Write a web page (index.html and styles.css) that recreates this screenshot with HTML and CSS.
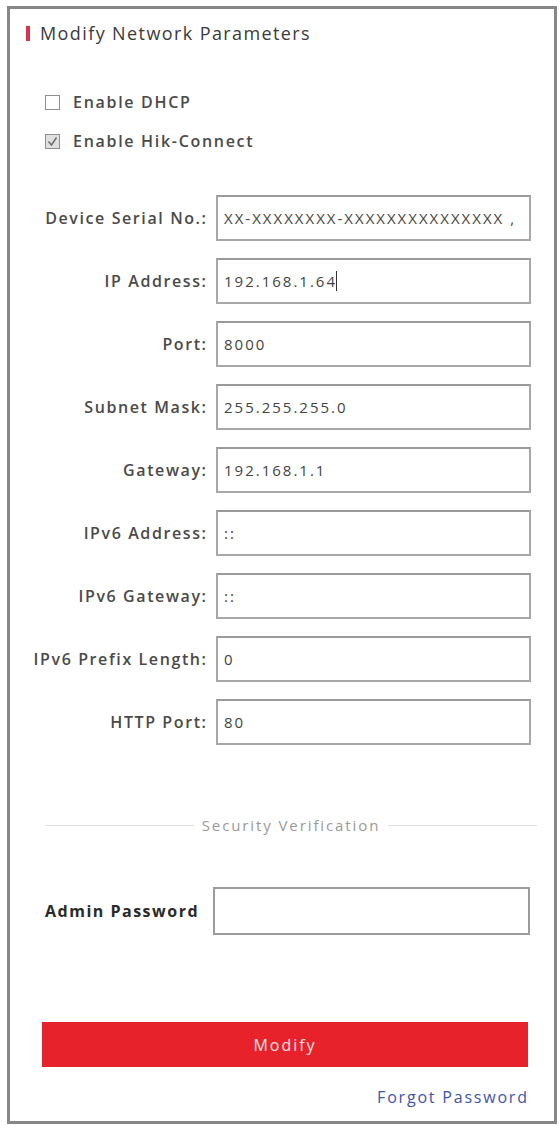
FILE: index.html
```html
<!DOCTYPE html>
<html lang="en">
<head>
<meta charset="utf-8">
<title>Modify Network Parameters</title>
<link rel="stylesheet" href="styles.css">
</head>
<body>
<div class="panel">
  <h2 class="title"><span class="bar"></span>Modify Network Parameters</h2>

  <div class="checks">
    <div class="check"><span class="box"></span><span>Enable DHCP</span></div>
    <div class="check"><span class="box checked"><svg viewBox="0 0 15 15" width="15" height="15"><path d="M3.5 7.5 L6.5 11 L11.5 3.5" fill="none" stroke="#6a6a6a" stroke-width="1.4"/></svg></span><span>Enable Hik-Connect</span></div>
  </div>

  <div class="form">
    <div class="lbl">Device Serial No.:</div><div class="field">XX-XXXXXXXX-XXXXXXXXXXXXXXX ,</div>
    <div class="lbl">IP Address:</div><div class="field">192.168.1.64<span class="caret"></span></div>
    <div class="lbl">Port:</div><div class="field">8000</div>
    <div class="lbl">Subnet Mask:</div><div class="field">255.255.255.0</div>
    <div class="lbl">Gateway:</div><div class="field">192.168.1.1</div>
    <div class="lbl">IPv6 Address:</div><div class="field">::</div>
    <div class="lbl">IPv6 Gateway:</div><div class="field">::</div>
    <div class="lbl">IPv6 Prefix Length:</div><div class="field">0</div>
    <div class="lbl">HTTP Port:</div><div class="field">80</div>
  </div>

  <div class="divider"><span class="line"></span><span class="dtext">Security Verification</span><span class="line"></span></div>

  <div class="admin">
    <div class="alabel">Admin Password</div>
    <div class="field afield"></div>
  </div>

  <button class="modify" type="button">Modify</button>

  <div class="forgot"><a href="#">Forgot Password</a></div>
</div>
</body>
</html>
```

FILE: styles.css
```css
html, body {
  margin: 0;
  padding: 0;
  background: #ffffff;
}

body {
  font-family: "Open Sans", "Noto Sans", "DejaVu Sans", sans-serif;
  color: #3a3a3a;
}

.panel {
  box-sizing: border-box;
  margin: 6px 2px 0 7px;
  height: 1118px;
  border: 3px solid #878787;
  padding-top: 12px;
  display: flex;
  flex-direction: column;
}

.title {
  margin: 0 0 0 16px;
  height: 24px;
  line-height: 24px;
  font-size: 18px;
  font-weight: 500;
  letter-spacing: 1.4px;
  color: #3b3b3b;
  display: flex;
  align-items: center;
  white-space: nowrap;
}

.bar {
  display: inline-block;
  width: 4px;
  height: 15px;
  background: #d8344a;
  margin-right: 10px;
}

.checks {
  margin: 45px 0 0 35px;
  display: flex;
  flex-direction: column;
  gap: 15px;
}

.check {
  height: 24px;
  display: flex;
  align-items: center;
  font-size: 16px;
  font-weight: 600;
  letter-spacing: 1.7px;
  color: #4a4a4a;
  white-space: nowrap;
}

.box {
  box-sizing: border-box;
  width: 15px;
  height: 15px;
  border: 1px solid #8f8f8f;
  background: #fff;
  margin-right: 13px;
  display: inline-flex;
  flex: none;
}

.box.checked {
  background: #e0e0e0;
}

.box svg {
  margin: -1px;
}

.form {
  margin: 42px 0 0 0;
  display: grid;
  grid-template-columns: 196px 315px;
  column-gap: 10px;
  row-gap: 17px;
}

.lbl {
  height: 46px;
  display: flex;
  align-items: center;
  justify-content: flex-end;
  font-size: 16px;
  font-weight: 600;
  letter-spacing: 1.6px;
  color: #4a4a4a;
  white-space: nowrap;
  margin-right: -1.6px;
}

.field {
  box-sizing: border-box;
  height: 46px;
  border: 2px solid #a8a8a8;
  border-top-color: #9a9a9a;
  padding-left: 6px;
  display: flex;
  align-items: center;
  overflow: hidden;
  white-space: nowrap;
  font-size: 15px;
  color: #444;
  letter-spacing: 2px;
}

.caret {
  display: inline-block;
  width: 1px;
  height: 20px;
  background: #333;
  margin-left: -1px;
}

.divider {
  margin: 70px 0 0 35px;
  width: 492px;
  height: 20px;
  display: flex;
  align-items: center;
  gap: 8px;
}

.line {
  flex: 1;
  height: 1px;
  background: #e0e0e0;
}

.dtext {
  font-size: 15px;
  color: #9a9a9a;
  letter-spacing: 1.9px;
  white-space: nowrap;
}

.admin {
  margin: 52px 0 0 35px;
  display: grid;
  grid-template-columns: 168px 317px;
  align-items: center;
}

.alabel {
  font-size: 16px;
  font-weight: 700;
  color: #2a2a2a;
  letter-spacing: 1.5px;
  white-space: nowrap;
}

.afield {
  height: 48px;
  border: 2px solid #9c9c9c;
}

.modify {
  margin: 87px 0 0 32px;
  width: 486px;
  height: 45px;
  border: none;
  background: #e8222b;
  color: #fde3e3;
  font-family: "Open Sans", "Noto Sans", sans-serif;
  font-size: 16px;
  letter-spacing: 2px;
  padding: 0;
}

.forgot {
  margin: 20px 27px 0 0;
  height: 20px;
  line-height: 20px;
  text-align: right;
}

.forgot a {
  font-size: 16px;
  color: #3d55ad;
  text-decoration: none;
  letter-spacing: 1.8px;
  margin-right: -1.8px;
}
```
